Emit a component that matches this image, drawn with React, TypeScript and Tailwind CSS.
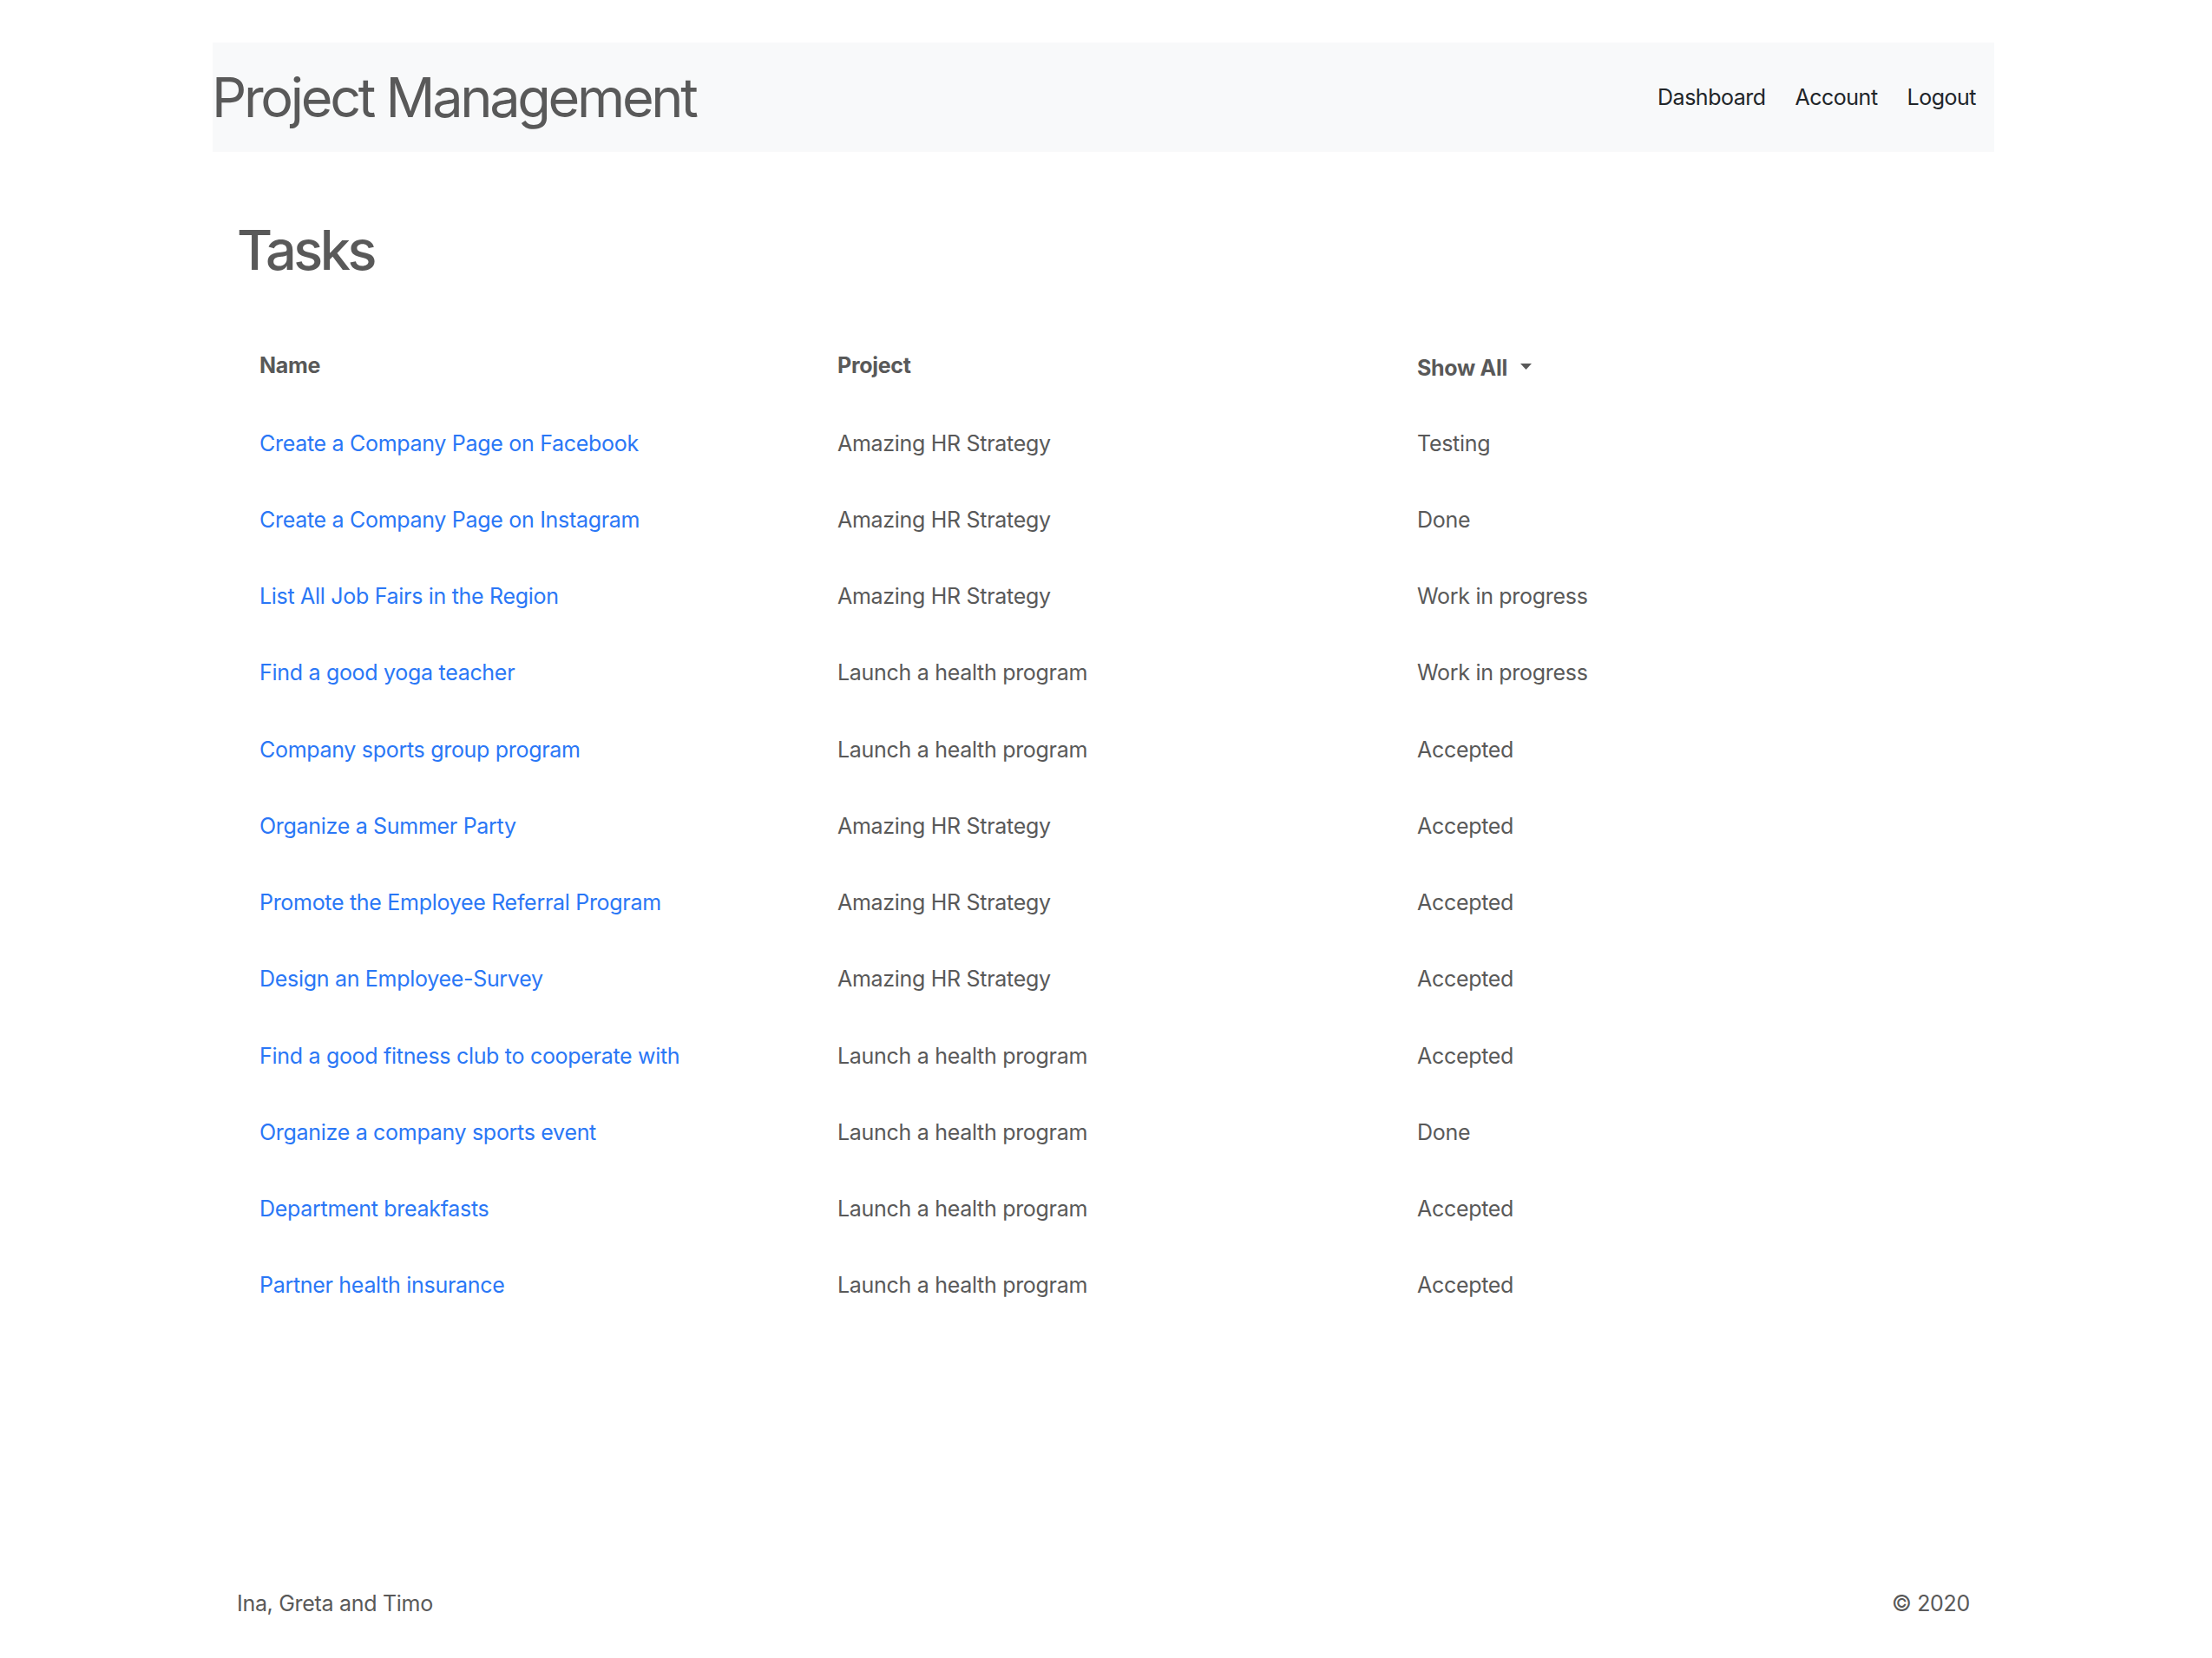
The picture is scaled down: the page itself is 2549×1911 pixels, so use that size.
const tasks = [
  ["Create a Company Page on Facebook", "Amazing HR Strategy", "Testing"],
  ["Create a Company Page on Instagram", "Amazing HR Strategy", "Done"],
  ["List All Job Fairs in the Region", "Amazing HR Strategy", "Work in progress"],
  ["Find a good yoga teacher", "Launch a health program", "Work in progress"],
  ["Company sports group program", "Launch a health program", "Accepted"],
  ["Organize a Summer Party", "Amazing HR Strategy", "Accepted"],
  ["Promote the Employee Referral Program", "Amazing HR Strategy", "Accepted"],
  ["Design an Employee-Survey", "Amazing HR Strategy", "Accepted"],
  ["Find a good fitness club to cooperate with", "Launch a health program", "Accepted"],
  ["Organize a company sports event", "Launch a health program", "Done"],
  ["Department breakfasts", "Launch a health program", "Accepted"],
  ["Partner health insurance", "Launch a health program", "Accepted"],
];

export default function App() {
  return (
    <div className="min-h-screen bg-white flex flex-col font-['Inter',sans-serif] text-[#595959] tracking-[-0.3px]">
      {/* top bar */}
      <nav className="mt-[49px] ml-[245px] w-[2053px] h-[126px] bg-[#f8f9fa] flex items-center justify-between">
        <a href="#" className="text-[63px] leading-none tracking-[-3.3px] -ml-[1px]">Project Management</a>
        <div className="flex items-center gap-[34px] pr-[21px] text-[25px] leading-none tracking-[-0.5px] text-[#212529]">
          <a href="#">Dashboard</a>
          <a href="#">Account</a>
          <a href="#">Logout</a>
        </div>
      </nav>

      <main className="ml-[273px] w-[1997px]">
        <h1 className="mt-[82px] text-[63px] leading-none font-medium tracking-[-3.5px]">Tasks</h1>

        <div className="mt-[55px] text-[25px] leading-none">
          <div className="grid grid-cols-[669px_668px_1fr] h-[92px] font-bold">
            <div className="flex items-center pl-[26px]">Name</div>
            <div className="flex items-center pl-[23px]">Project</div>
            <div className="flex items-center pl-[23px] pt-[6px]">
              <button className="flex items-center gap-[15px] font-bold">
                Show All
                <svg width="13" height="7" viewBox="0 0 13 7" className="-mt-[4px]">
                  <path d="M0 0h13L6.5 7z" fill="#595959" />
                </svg>
              </button>
            </div>
          </div>

          {tasks.map(([name, project, status]) => (
            <div key={name} className="grid grid-cols-[669px_668px_1fr] h-[88.25px]">
              <div className="flex items-center pl-[26px]">
                <a href="#" className="text-[#2a77f6]">{name}</a>
              </div>
              <div className="flex items-center pl-[23px]">{project}</div>
              <div className="flex items-center pl-[23px]">{status}</div>
            </div>
          ))}
        </div>
      </main>

      <footer className="mt-auto ml-[273px] w-[1997px] pb-[50px] flex justify-between text-[25px] leading-none">
        <span>Ina, Greta and Timo</span>
        <span>© 2020</span>
      </footer>
    </div>
  );
}
